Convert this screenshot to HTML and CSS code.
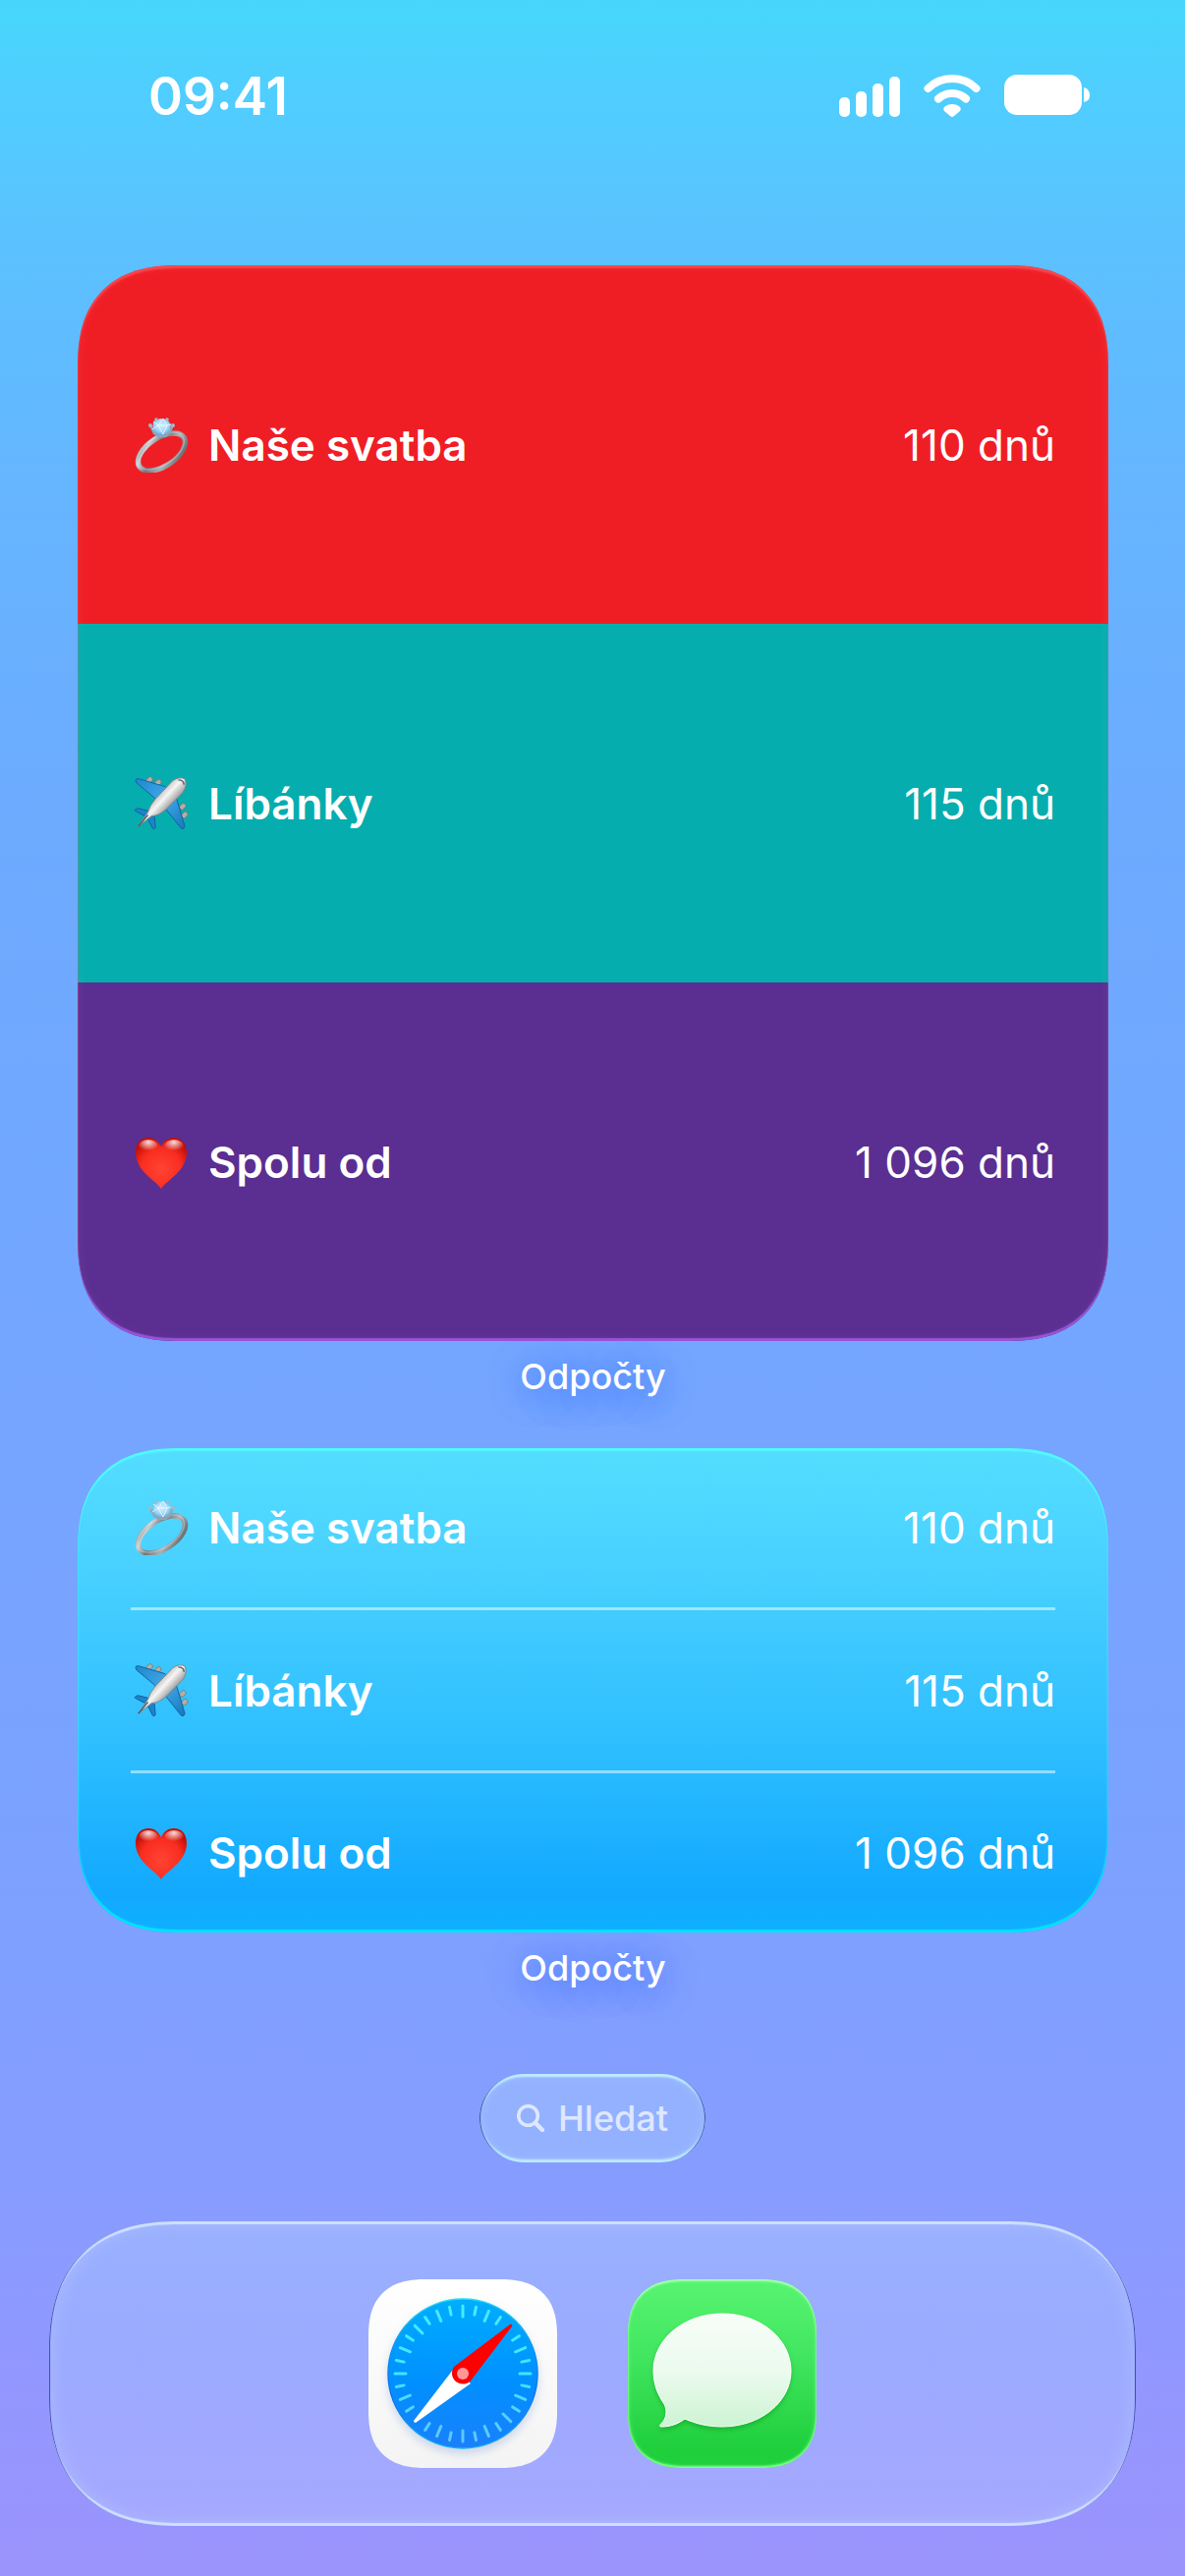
FILE: index.html
```html
<!DOCTYPE html>
<html lang="cs">
<head>
<meta charset="utf-8">
<meta name="viewport" content="width=device-width, initial-scale=1">
<title>Odpočty</title>
<link rel="stylesheet" href="styles.css">
</head>
<body>
<svg class="defs" aria-hidden="true">
  <defs>
    <linearGradient id="metal" x1="0" y1="0" x2="1" y2="1">
      <stop offset="0" stop-color="#6f767c"/><stop offset=".2" stop-color="#cdd0d3"/><stop offset=".4" stop-color="#71777d"/><stop offset=".65" stop-color="#adb1b5"/><stop offset="1" stop-color="#4d5359"/>
    </linearGradient>
    <radialGradient id="gem" cx=".5" cy=".4" r=".6">
      <stop offset="0" stop-color="#d2f0ff"/><stop offset=".6" stop-color="#9dd8fa"/><stop offset="1" stop-color="#6aa6d6"/>
    </radialGradient>
    <linearGradient id="hull" gradientUnits="userSpaceOnUse" x1="29" y1="17" x2="43" y2="30">
      <stop offset="0" stop-color="#c9c9c9"/><stop offset=".35" stop-color="#f6f6f6"/><stop offset="1" stop-color="#8f8f8f"/>
    </linearGradient>
    <linearGradient id="wing" x1="0" y1="0" x2="1" y2="1">
      <stop offset="0" stop-color="#1f86cc"/><stop offset=".5" stop-color="#3fa9ea"/><stop offset="1" stop-color="#1776bb"/>
    </linearGradient>
    <radialGradient id="heart" cx=".5" cy=".62" r=".62">
      <stop offset="0" stop-color="#ff4433"/><stop offset=".65" stop-color="#f92d20"/><stop offset="1" stop-color="#c30f07"/>
    </radialGradient>
    <radialGradient id="shine" cx=".5" cy=".2" r=".6">
      <stop offset="0" stop-color="#fff" stop-opacity=".85"/><stop offset="1" stop-color="#fff" stop-opacity="0"/>
    </radialGradient>
    <linearGradient id="dial" x1="0" y1="0" x2="0" y2="1">
      <stop offset="0" stop-color="#00aefe"/><stop offset=".55" stop-color="#0090ff"/><stop offset="1" stop-color="#1a80fb"/>
    </linearGradient>
    <linearGradient id="rim" x1="0" y1="0" x2="0" y2="1">
      <stop offset="0" stop-color="#1fe0f0"/><stop offset=".35" stop-color="#0a8df0"/><stop offset=".65" stop-color="#0a6fe8"/><stop offset="1" stop-color="#18b4f2"/>
    </linearGradient>
    <linearGradient id="tick" gradientUnits="userSpaceOnUse" x1="0" y1="26" x2="0" y2="166">
      <stop offset="0" stop-color="#46ecff"/><stop offset=".5" stop-color="#3fe6ff"/><stop offset="1" stop-color="#62c4ff"/>
    </linearGradient>
    <linearGradient id="bubble" x1="0" y1="0" x2="0" y2="1">
      <stop offset="0" stop-color="#f7fdf8"/><stop offset=".5" stop-color="#ecfbee"/><stop offset="1" stop-color="#cdf3d3"/>
    </linearGradient>
    <symbol id="ring" viewBox="0 1 56 56">
      <ellipse cx="28.500" cy="36" rx="27" ry="14.500" transform="rotate(-33 28.500 36)" fill="none" stroke="url(#metal)" stroke-width="5.500"/>
      <ellipse cx="27.500" cy="35" rx="27" ry="14.500" transform="rotate(-33 27.500 35)" fill="none" stroke="#f2f4f5" stroke-opacity=".3" stroke-width="1.500"/>
      <path d="M17 9l4 8 4 3h7l4-3 4-8" fill="none" stroke="#93a6b4" stroke-width="2.500"/>
      <path d="M20 5l7-3 7 1 4 5-1 7-6 4h-6l-6-5z" fill="url(#gem)"/>
      <path d="M20 5l5 4 5-7 4 7 4-1M25 9h9l-4 9-5-9-6 4" fill="none" stroke="#fff" stroke-opacity=".7" stroke-width="1"/>
      <g fill="#a5b8c5"><circle cx="23" cy="3" r="1.800"/><circle cx="34" cy="3" r="1.800"/><circle cx="17" cy="9" r="2"/><circle cx="40" cy="9" r="2"/></g>
    </symbol>
    <symbol id="plane" viewBox="0 0 58 58">
      <g fill="#b3aeaa" stroke="#78736f" stroke-width=".8">
        <rect x="13" y="2" width="7" height="5" rx="2" transform="rotate(-45 16 4)"/><rect x="22" y="5" width="7" height="5" rx="2" transform="rotate(-45 25 7)"/>
        <rect x="48" y="30" width="7" height="5" rx="2" transform="rotate(-45 51 32)"/><rect x="50" y="39" width="7" height="5" rx="2" transform="rotate(-45 53 41)"/>
      </g>
      <path d="M2 4Q3 2 6 3L33 11 45 23 54 53Q53 57 50 55L35 36 21 22 3 7Z" fill="url(#wing)" stroke="#12619d" stroke-width="1"/>
      <path d="M1 36Q2 34 5 34L17 37 22 43 23 54Q22 57 20 55L14 43 4 38Z" fill="#1c84ca" stroke="#12619d" stroke-width="1"/>
      <path d="M5 53L15 38Q17 31 23 24L41 5Q48 0 54 3 57 9 52 17L34 35Q26 42 19 42Z" fill="url(#hull)" stroke="#858585" stroke-width="1"/>
      <path d="M47 4Q53 4 53 9M5 53L15 41" fill="none" stroke="#555f68" stroke-width="1.500"/>
    </symbol>
    <symbol id="love" viewBox="-2 -3 56 56">
      <path d="M26 52C20 43 0 34 0 15 0 5 6 0 13 0c6 0 10 3 13 9 3-6 7-9 13-9 7 0 13 5 13 15 0 19-20 28-26 37z" fill="url(#heart)"/>
      <ellipse cx="13" cy="9" rx="10" ry="7" fill="url(#shine)"/><ellipse cx="39" cy="9" rx="10" ry="7" fill="url(#shine)"/>
    </symbol>
  </defs>
</svg>

<div class="screen">
  <header class="status">
    <time class="clock">09:41</time>
    <div class="indicators">
      <svg class="signal" viewBox="0 0 62 44" aria-label="Signál" role="img"><g fill="#fff"><rect x="0" y="23" width="11" height="20" rx="5"/><rect x="17" y="17" width="11" height="26" rx="5"/><rect x="34" y="9" width="11" height="34" rx="5"/><rect x="51" y="2" width="11" height="41" rx="5"/></g></svg>
      <svg class="wifi" viewBox="0 0 58 44" aria-label="Wi-Fi" role="img"><g fill="none" stroke="#fff" stroke-width="8" stroke-linecap="round"><path d="M4.500 14Q14.500 4 29 4T53.500 14"/><path d="M15 24.500Q21 19 29 19T43 24.500"/></g><path d="M29 30c3 0 6 1 8 3 1 1 1 3 0 4l-6 5q-2 2-4 0l-6-5c-1-1-1-3 0-4 2-2 5-3 8-3z" fill="#fff"/></svg>
      <svg class="battery" viewBox="0 0 88 44" aria-label="Baterie" role="img"><rect width="79" height="41" rx="13" fill="#fff"/><path d="M81 13c4 1 6 4 6 8s-2 6-6 7z" fill="#fff"/></svg>
    </div>
  </header>

  <main class="widgets">
    <figure class="widget">
      <ul class="card card-bands">
        <li class="row red"><svg class="emoji" aria-hidden="true"><use href="#ring"/></svg><span class="name">Naše svatba</span><span class="days">110 dnů</span></li>
        <li class="row teal"><svg class="emoji" aria-hidden="true"><use href="#plane"/></svg><span class="name">Líbánky</span><span class="days">115 dnů</span></li>
        <li class="row purple"><svg class="emoji" aria-hidden="true"><use href="#love"/></svg><span class="name">Spolu od</span><span class="days">1 096 dnů</span></li>
      </ul>
      <figcaption class="caption">Odpočty</figcaption>
    </figure>
    <figure class="widget">
      <ul class="card card-list">
        <li class="row"><svg class="emoji" aria-hidden="true"><use href="#ring"/></svg><span class="name">Naše svatba</span><span class="days">110 dnů</span></li>
        <li class="row"><svg class="emoji" aria-hidden="true"><use href="#plane"/></svg><span class="name">Líbánky</span><span class="days">115 dnů</span></li>
        <li class="row"><svg class="emoji" aria-hidden="true"><use href="#love"/></svg><span class="name">Spolu od</span><span class="days">1 096 dnů</span></li>
      </ul>
      <figcaption class="caption">Odpočty</figcaption>
    </figure>
  </main>

  <button class="search" type="button">
    <svg class="lens" viewBox="0 0 28 28" aria-hidden="true"><circle cx="11.500" cy="11.500" r="9.800" fill="none" stroke="currentColor" stroke-width="3.600"/><path d="M19 19l7 7" stroke="currentColor" stroke-width="4.500" stroke-linecap="round"/></svg>
    Hledat
  </button>

  <nav class="dock">
    <a class="app safari" href="#safari" aria-label="Safari">
      <svg viewBox="0 0 192 192" aria-hidden="true">
        <circle class="dial" cx="96" cy="96" r="76" fill="url(#dial)" stroke="url(#rim)" stroke-width="1.500"/>
        <g stroke="url(#tick)" stroke-width="3" stroke-linecap="round">
          <path d="M96.010 27V38M95.990 154v11M27 96.010h11M154 95.990h11"/>
          <path d="M82.500 28.300l1.600 7.800M109.500 28.300l-1.600 7.800M82.500 163.700l1.600-7.800M109.500 163.700l-1.600-7.800M28.300 82.500l7.800 1.600M28.300 109.500l7.800-1.600M163.700 82.500l-7.800 1.600M163.700 109.500l-7.800-1.600"/>
          <path d="M69.600 32.300l4.200 10.100M122.400 32.300l-4.200 10.100M69.600 159.700l4.200-10.100M122.400 159.700l-4.200-10.100M32.300 69.600l10.100 4.200M32.300 122.400l10.100-4.200M159.700 69.600l-10.100 4.200M159.700 122.400l-10.100-4.200"/>
          <path d="M57.700 38.600l4.400 6.700M134.300 38.600l-4.400 6.700M57.700 153.400l4.400-6.700M134.300 153.400l-4.400-6.700M38.600 57.700l6.700 4.400M38.600 134.300l6.700-4.400M153.400 57.700l-6.700 4.400M153.400 134.300l-6.700-4.400"/>
          <path d="M47.200 47.200l7.800 7.800M144.800 144.800l-7.800-7.800"/>
        </g>
        <path d="M86 92L46 144q0 2 2 2l56-40z" fill="#fff"/>
        <path d="M87 89L144 46q3-1 2 2L105 102A11 11 0 1 1 87 89z" fill="#f00"/>
        <circle cx="96" cy="96" r="6" fill="#ff9797"/>
      </svg>
    </a>
    <a class="app messages" href="#messages" aria-label="Zprávy">
      <svg viewBox="0 0 192 192" aria-hidden="true">
        <path class="balloon" d="M96 35C135 35 166 61 166 93S135 150 96 150C82 150 69 147 58 142 50 148 42 150 34 150 32 150 32 148 34 147 40 141 40 133 37 127 30 117 26 106 26 93 26 61 57 35 96 35z" fill="url(#bubble)" stroke="#fff" stroke-width="1"/>
      </svg>
    </a>
  </nav>
</div>
</body>
</html>
```
FILE: styles.css
```css
* { box-sizing: border-box; }

body {
  margin: 0;
  color: #fff;
  font-family: Inter, "Liberation Sans", sans-serif;
  background: linear-gradient(#47d7fb 0%, #50cdff 4%, #5bc2ff 9%, #66b4ff 20%, #6dabff 32%, #74a6ff 52%, #7ba2ff 70%, #869dff 84%, #9795fe 96%, #9c94fd 100%);
}

.defs { position: absolute; width: 0; height: 0; }

.screen {
  display: flex;
  flex-direction: column;
  min-height: 100vh;
  padding: 0 50px 51px;
}

/* Status bar */
.status {
  display: flex;
  justify-content: space-between;
  align-items: center;
  height: 196px;
  padding: 0 46px 0 101px;
}
.clock { font-size: 53px; font-weight: 600; line-height: 60px; }
.indicators { display: flex; align-items: center; gap: 24px; }
.signal { width: 62px; height: 44px; }
.wifi { width: 58px; height: 44px; }
.battery { width: 88px; height: 44px; }

/* Widgets */
.widgets {
  display: flex;
  flex-direction: column;
  gap: 36px;
  padding: 74px 28px 0 29px;
}
.widget { margin: 0; }
.card {
  position: relative;
  display: grid;
  margin: 0;
  padding: 0;
  overflow: hidden;
  list-style: none;
  border-radius: 90px;
}
.card::after {
  content: "";
  position: absolute;
  inset: 0;
  border-radius: inherit;
  pointer-events: none;
}
.card-bands { grid-auto-rows: 365px; }
.card-bands::after {
  box-shadow: inset 0 3px 2px #ff5a60aa, inset 0 -3px 1px #a95be8cc, inset 0 0 12px #ffffff14;
}
.card-list {
  grid-template-rows: 162px 166px 165px;
  background: linear-gradient(#53deff, #4ad2ff 22%, #2fbfff 60%, #12a9ff 92%, #0fb0ff);
}
.card-list::after { box-shadow: inset 0 3px 1px #52f8ff, inset 0 -3px 1px #00e4ff, inset 0 0 3px #52e8ff; }

.row {
  display: flex;
  align-items: center;
  padding: 0 54px;
  font-size: 44px;
  line-height: 54px;
}
.card-list .row { margin: 0 54px; padding: 0; }
.card-list .row + .row { border-top: 3px solid #ffffff80; }
.red { background: #ef1e25; }
.teal { background: #06adae; }
.purple { background: #5b2e91; }
.emoji { flex: none; width: 56px; height: 56px; margin: 0 20px 0 3px; }
.name { flex: 1; font-weight: 600; }
.days { font-weight: 400; }

.caption {
  height: 73px;
  padding-top: 14px;
  font-size: 36px;
  font-weight: 500;
  line-height: 44px;
  text-align: center;
  text-shadow: 0 6px 30px #2f6cff99, 0 3px 40px #2f6cff66;
}

/* Search pill */
.search {
  display: flex;
  align-items: center;
  justify-content: center;
  gap: 14px;
  align-self: center;
  width: 230px;
  height: 90px;
  margin-top: 71px;
  padding: 0;
  border: 0;
  border-radius: 45px;
  color: #dfe7ff;
  font: 500 36px/44px Inter, "Liberation Sans", sans-serif;
  background: #93b1ff;
  box-shadow: inset 2px 0 1px -1px #3546b0, inset -2px 0 1px -1px #3546b0, inset 0 3px 2px #bdeeff, inset 0 -3px 2px #bdeeff, inset 0 0 12px #a6c4ff;
}
.lens { width: 28px; height: 28px; }

/* Dock */
.dock {
  display: flex;
  justify-content: center;
  align-items: center;
  gap: 72px;
  height: 310px;
  margin-top: 60px;
  border-radius: 120px;
  background: linear-gradient(#98b0ff, #9caaff 50%, #a6a8ff);
  box-shadow: inset 2px 0 1px -1px #3a46b4, inset -2px 0 1px -1px #3a46b4, inset 0 3px 1px #cfe0ff, inset 0 -3px 1px #cfe0ff, inset 0 0 20px #afbfff;
}
.app {
  width: 192px;
  height: 192px;
  overflow: hidden;
  border-radius: 48px;
}
.app svg { display: block; width: 100%; height: 100%; }
.safari { background: linear-gradient(#fff, #f4f4f4); }
.messages {
  background: linear-gradient(#58f471, #42e660 40%, #1fcf3c 90%);
  box-shadow: inset 0 2px 2px #a8ffb4, inset 0 -2px 2px #7dff90, inset 0 0 5px #6dfb82;
}
.dial { filter: drop-shadow(0 5px 5px #4878c840); }
.balloon { filter: drop-shadow(0 3px 2px #0b9a2180); }

/* Continuous corners where the engine can draw them */
@supports (corner-shape: squircle) {
  .card, .card::after { border-radius: 104px; corner-shape: superellipse(1.3); }
  .dock { border-radius: 132px; corner-shape: superellipse(1.25); }
  .app { border-radius: 58px; corner-shape: superellipse(1.3); }
}
```
